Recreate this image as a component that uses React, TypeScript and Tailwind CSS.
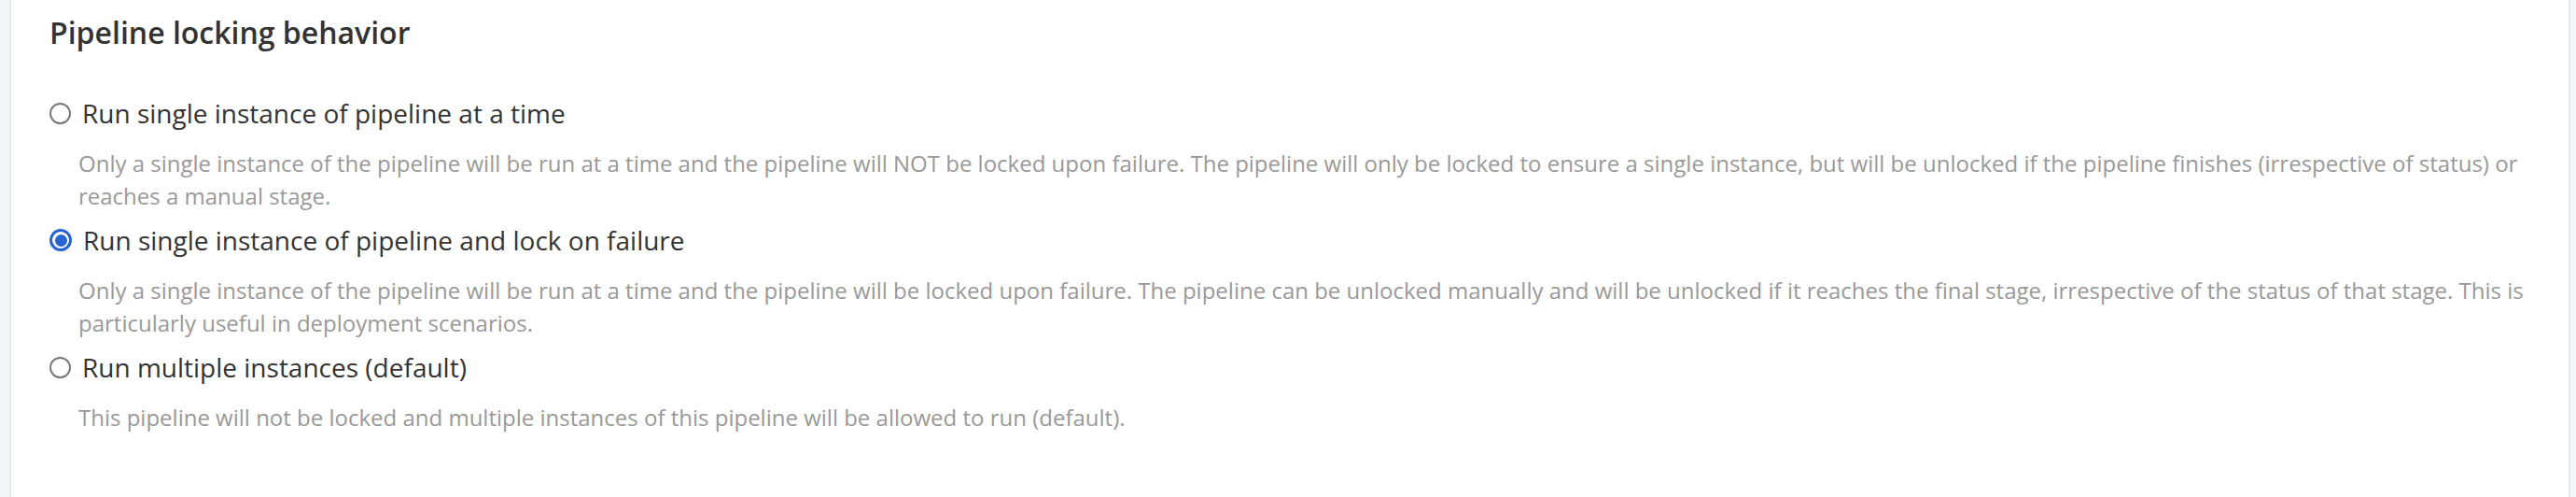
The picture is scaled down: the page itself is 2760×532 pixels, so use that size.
import React from 'react';

type LockOption = {
  id: string;
  label: string;
  description: string;
};

const options: LockOption[] = [
  {
    id: 'unlockWhenFinished',
    label: 'Run single instance of pipeline at a time',
    description:
      'Only a single instance of the pipeline will be run at a time and the pipeline will NOT be locked upon failure. The pipeline will only be locked to ensure a single instance, but will be unlocked if the pipeline finishes (irrespective of status) or reaches a manual stage.',
  },
  {
    id: 'lockOnFailure',
    label: 'Run single instance of pipeline and lock on failure',
    description:
      'Only a single instance of the pipeline will be run at a time and the pipeline will be locked upon failure. The pipeline can be unlocked manually and will be unlocked if it reaches the final stage, irrespective of the status of that stage. This is particularly useful in deployment scenarios.',
  },
  {
    id: 'none',
    label: 'Run multiple instances (default)',
    description:
      'This pipeline will not be locked and multiple instances of this pipeline will be allowed to run (default).',
  },
];

function RadioDot({ checked }: { checked: boolean }) {
  if (checked) {
    return (
      <span className="flex h-[24px] w-[24px] shrink-0 items-center justify-center rounded-full border-[3px] border-[#2a64d2] bg-white">
        <span className="h-[13px] w-[13px] rounded-full bg-[#2a64d2]" />
      </span>
    );
  }
  return (
    <span className="h-[23px] w-[23px] shrink-0 rounded-full border-[2px] border-[#7a7a7a] bg-white" />
  );
}

export default function App() {
  const [selected, setSelected] = React.useState('lockOnFailure');

  return (
    <div
      className="flex h-[532px] w-full bg-[#f2f6f8]"
      style={{ fontFamily: '"Open Sans", "Liberation Sans", sans-serif' }}
    >
      <div className="w-[10px] shrink-0" />
      <div className="flex-1 border-x-2 border-[#e5eaed] bg-white">
        <div className="pl-[41px] pt-[15px]">
          <h3 className="text-[32px] leading-[40px] font-semibold text-[#333333]">
            Pipeline locking behavior
          </h3>

          {/* Lock behavior options */}
          <div className="mt-[46px] flex flex-col gap-[10px]">
            {options.map(opt => (
              <div key={opt.id}>
                <label
                  className="flex h-[40px] cursor-pointer items-center gap-[12px]"
                  onClick={() => setSelected(opt.id)}
                >
                  <RadioDot checked={selected === opt.id} />
                  <span className="text-[28px] leading-[40px] text-[#333333]">{opt.label}</span>
                </label>
                <p className="mt-[16px] pl-[31px] pr-[16px] text-[24px] leading-[35px] text-[#999999]">
                  {opt.description}
                </p>
              </div>
            ))}
          </div>
        </div>
      </div>
      <div className="w-[6px] shrink-0" />
    </div>
  );
}
